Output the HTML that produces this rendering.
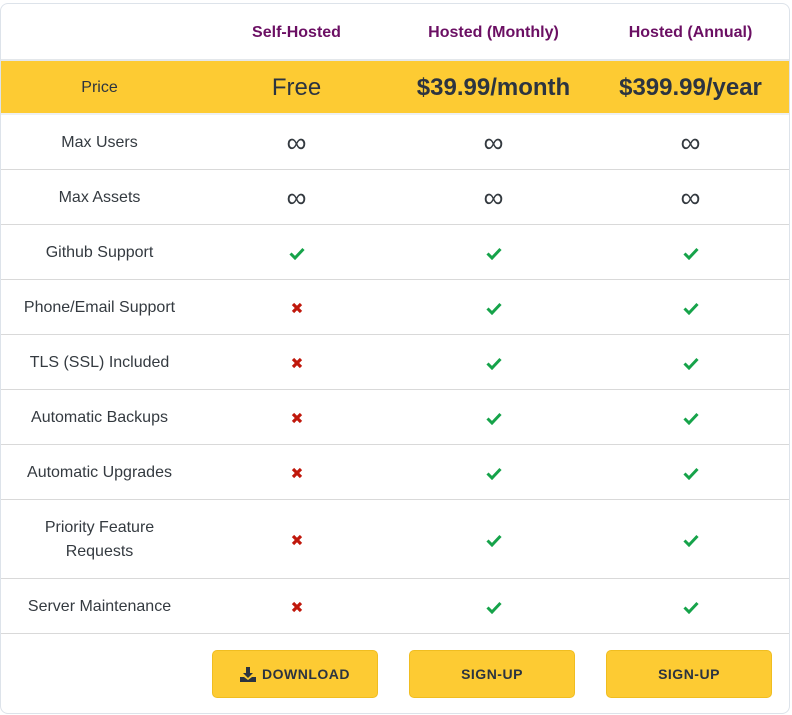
<!DOCTYPE html>
<html><head><style>
body{margin:0;background:#fff;font-family:"Liberation Sans",sans-serif;}
.card{position:absolute;left:0;top:3px;width:788px;height:709px;border:1px solid #dde3ea;border-radius:8px;overflow:hidden;background:#fff}
.row{position:absolute;left:0;width:788px;display:flex;align-items:center;border-bottom:1px solid #d9d9d9;box-sizing:border-box}
.row>div{width:197px;text-align:center;color:#343a40;font-size:16px;padding-top:2px}
.hd>div{color:#6b0f63;font-weight:bold;font-size:16px}
.price{background:#fdcb33;border-top:2px solid #e3e7eb;border-bottom:2px solid #eef0f2}
.price>div{font-size:24px;font-weight:bold;color:#2c3440}
.inf{font-size:28px!important;line-height:1}
.row svg{display:block;margin:0 auto}
.btn{position:absolute;top:646px;width:166px;height:48px;background:#fdcb33;border:1px solid #f0bd20;border-radius:5px;box-sizing:border-box;display:flex;align-items:center;justify-content:center;font-weight:bold;font-size:14px;color:#2b3340;letter-spacing:.5px}
</style></head><body>
<svg width="0" height="0" style="position:absolute"><defs>
<symbol id="ck" viewBox="0 0 16 14"><path d="M1.5 7.5l4.5 4.5 8.5-9" fill="none" stroke="#16a34a" stroke-width="3"/></symbol>
<symbol id="x" viewBox="0 0 12 12"><path d="M2 2l8 8M10 2l-8 8" fill="none" stroke="#c0180c" stroke-width="3.2"/></symbol>
</defs></svg>
<div class="card">
<div class="row hd" style="top:0;height:55px;border:none"><div>&nbsp;</div><div>Self-Hosted</div><div>Hosted (Monthly)</div><div>Hosted (Annual)</div></div>
<div class="row price" style="top:55px;height:56px"><div style="font-size:16px;font-weight:normal">Price</div><div style="font-weight:normal">Free</div><div>$39.99/month</div><div>$399.99/year</div></div>
<div class="row" style="top:111px;height:55px"><div>Max Users</div><div class="inf">∞</div><div class="inf">∞</div><div class="inf">∞</div></div>
<div class="row" style="top:166px;height:55px"><div>Max Assets</div><div class="inf">∞</div><div class="inf">∞</div><div class="inf">∞</div></div>
<div class="row" style="top:221px;height:55px"><div>Github Support</div><div><svg width="16" height="14"><use href="#ck"/></svg></div><div><svg width="16" height="14"><use href="#ck"/></svg></div><div><svg width="16" height="14"><use href="#ck"/></svg></div></div>
<div class="row" style="top:276px;height:55px"><div>Phone/Email Support</div><div><svg width="12" height="12"><use href="#x"/></svg></div><div><svg width="16" height="14"><use href="#ck"/></svg></div><div><svg width="16" height="14"><use href="#ck"/></svg></div></div>
<div class="row" style="top:331px;height:55px"><div>TLS (SSL) Included</div><div><svg width="12" height="12"><use href="#x"/></svg></div><div><svg width="16" height="14"><use href="#ck"/></svg></div><div><svg width="16" height="14"><use href="#ck"/></svg></div></div>
<div class="row" style="top:386px;height:55px"><div>Automatic Backups</div><div><svg width="12" height="12"><use href="#x"/></svg></div><div><svg width="16" height="14"><use href="#ck"/></svg></div><div><svg width="16" height="14"><use href="#ck"/></svg></div></div>
<div class="row" style="top:441px;height:55px"><div>Automatic Upgrades</div><div><svg width="12" height="12"><use href="#x"/></svg></div><div><svg width="16" height="14"><use href="#ck"/></svg></div><div><svg width="16" height="14"><use href="#ck"/></svg></div></div>
<div class="row" style="top:496px;height:79px"><div style="line-height:24px">Priority Feature<br>Requests</div><div><svg width="12" height="12"><use href="#x"/></svg></div><div><svg width="16" height="14"><use href="#ck"/></svg></div><div><svg width="16" height="14"><use href="#ck"/></svg></div></div>
<div class="row" style="top:575px;height:55px"><div>Server Maintenance</div><div><svg width="12" height="12"><use href="#x"/></svg></div><div><svg width="16" height="14"><use href="#ck"/></svg></div><div><svg width="16" height="14"><use href="#ck"/></svg></div></div>
<div class="btn" style="left:211px"><svg width="16" height="15" viewBox="0 0 16 15" style="margin-right:6px"><path d="M6 0h4v6h3l-5 5-5-5h3z" fill="#2b3340"/><path d="M0 10h4l4 3 4-3h4v5H0z" fill="#2b3340"/></svg>DOWNLOAD</div>
<div class="btn" style="left:408px">SIGN-UP</div>
<div class="btn" style="left:605px">SIGN-UP</div>
</div>
</body></html>
